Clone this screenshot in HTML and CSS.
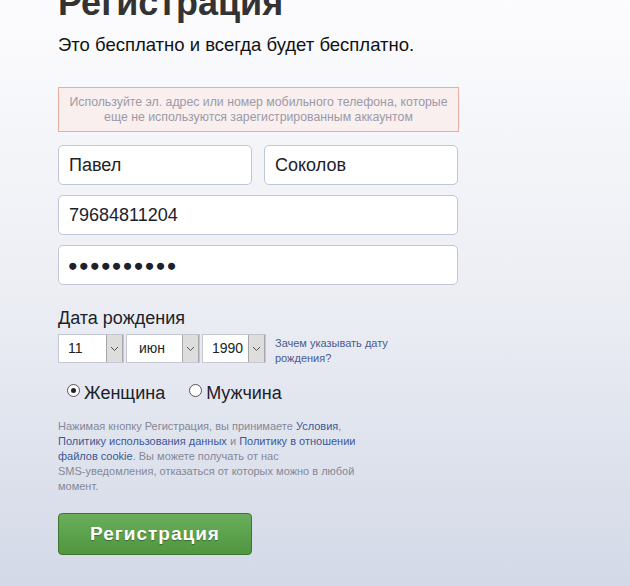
FILE: index.html
```html
<!DOCTYPE html>
<html lang="ru">
<head>
    <meta charset="UTF-8">
    <title>Регистрация</title>
    <link rel="stylesheet" href="styles.css">
</head>
<body>
    <div class="signup">
        <h1 class="title">Регистрация</h1>
        <div class="subtitle">Это бесплатно и всегда будет бесплатно.</div>

        <!-- Подсказка об ошибке -->
        <div class="notice">Используйте эл. адрес или номер мобильного телефона, которые<br>еще не используются зарегистрированным аккаунтом</div>

        <div class="row">
            <div class="field half">Павел</div>
            <div class="field half">Соколов</div>
        </div>
        <div class="field">79684811204</div>
        <div class="field dots">●●●●●●●●●●</div>

        <div class="label">Дата рождения</div>
        <div class="birthday">
            <div class="select day"><span class="val">11</span><span class="arrow"><svg width="9" height="6" viewBox="0 0 9 6"><path d="M1 1l3.5 3.5L8 1" fill="none" stroke="#555" stroke-width="1"/></svg></span></div>
            <div class="select month"><span class="val">июн</span><span class="arrow"><svg width="9" height="6" viewBox="0 0 9 6"><path d="M1 1l3.5 3.5L8 1" fill="none" stroke="#555" stroke-width="1"/></svg></span></div>
            <div class="select year"><span class="val">1990</span><span class="arrow"><svg width="9" height="6" viewBox="0 0 9 6"><path d="M1 1l3.5 3.5L8 1" fill="none" stroke="#555" stroke-width="1"/></svg></span></div>
            <a class="why" href="#">Зачем указывать дату<br>рождения?</a>
        </div>

        <div class="gender">
            <label class="radio"><span class="circle checked"></span>Женщина</label>
            <label class="radio"><span class="circle"></span>Мужчина</label>
        </div>

        <p class="terms">Нажимая кнопку Регистрация, вы принимаете <a href="#">Условия</a>,<br><a href="#">Политику использования данных</a> и <a href="#">Политику в отношении<br>файлов cookie</a>. Вы можете получать от нас<br>SMS-уведомления, отказаться от которых можно в любой<br>момент.</p>

        <button class="submit">Регистрация</button>
    </div>
</body>
</html>
```

FILE: styles.css
```css
html {
    height: 100%;
}

body {
    margin: 0;
    min-height: 100%;
    overflow: hidden;
    font-family: 'Liberation Sans', Arial, sans-serif;
    background: linear-gradient(to bottom, #fcfcfe 0%, #eceef4 50%, #d3d9e7 100%);
    color: #1d2129;
}

.signup {
    display: flex;
    flex-direction: column;
    align-items: flex-start;
    padding-left: 58px;
    width: 400px;
}

.title {
    margin: -15px 0 0 0;
    font-size: 36px;
    line-height: 36px;
    font-weight: bold;
    color: #333;
}

.subtitle {
    margin-top: 14px;
    font-size: 18.5px;
    line-height: 20px;
    color: #111;
}

/* Подсказка */
.notice {
    box-sizing: border-box;
    width: 401px;
    margin-top: 32px;
    padding: 7px 2px 6px;
    border: 1px solid #efab9e;
    background: #f9efef;
    color: #9b9aa6;
    font-size: 12.3px;
    line-height: 15px;
    text-align: center;
}

.row {
    display: flex;
    gap: 12px;
    margin-top: 13px;
}

.field {
    box-sizing: border-box;
    width: 400px;
    height: 40px;
    margin-bottom: 10px;
    padding: 0 10px;
    border: 1px solid #bdc7d8;
    border-radius: 5px;
    background: #fff;
    font-size: 18px;
    line-height: 38px;
    color: #1d2129;
}

.row .field {
    margin-bottom: 0;
}

.row + .field {
    margin-top: 10px;
}

.field.half {
    width: 194px;
}

.field.dots {
    padding-left: 9px;
    font-size: 16.5px;
    letter-spacing: 1px;
}

.label {
    margin-top: 13px;
    font-size: 18px;
    line-height: 20px;
    color: #1d2129;
}

/* Дата рождения */
.birthday {
    display: flex;
    align-items: flex-start;
    gap: 2px;
    margin-top: 6px;
}

.select {
    box-sizing: border-box;
    display: flex;
    height: 29px;
    border: 1px solid #c3c7d1;
    background: #fff;
    font-size: 14px;
}

.select .val {
    flex: 1;
    padding-left: 9px;
    line-height: 27px;
    color: #222;
}

.select .arrow {
    width: 15px;
    display: flex;
    align-items: center;
    justify-content: center;
    background: #dddddd;
    border-left: 1px solid #a8a8a8;
    border-right: 1px solid #a8a8a8;
}

.day { width: 66px; }
.month { width: 74px; }
.month .val { padding-left: 12px; }
.year { width: 64px; }

.why {
    margin-left: 7px;
    margin-top: 2px;
    font-size: 11px;
    line-height: 15px;
    color: #4b5b8f;
    text-decoration: none;
}

.gender {
    display: flex;
    gap: 24px;
    margin-top: 17px;
    padding-left: 9px;
}

.radio {
    display: flex;
    align-items: center;
    font-size: 18px;
    line-height: 20px;
    color: #1d2129;
}

.circle {
    box-sizing: border-box;
    width: 13px;
    height: 13px;
    margin-right: 4px;
    margin-top: -6px;
    border: 1px solid #555;
    border-radius: 50%;
    background: #fff;
    display: flex;
    align-items: center;
    justify-content: center;
}

.circle.checked::after {
    content: "";
    width: 5px;
    height: 5px;
    border-radius: 50%;
    background: #222;
}

.terms {
    margin: 16px 0 0 0;
    font-size: 11px;
    line-height: 15px;
    color: #858896;
}

.terms a {
    color: #3b5998;
    text-decoration: none;
}

.submit {
    box-sizing: border-box;
    width: 194px;
    height: 42px;
    margin-top: 19px;
    border: 1px solid #3e7530;
    border-radius: 4px;
    background: linear-gradient(to bottom, #6aae5b 0%, #4f963f 100%);
    color: #fff;
    font-family: 'Liberation Sans', Arial, sans-serif;
    font-size: 19px;
    font-weight: bold;
    letter-spacing: 1px;
    text-shadow: 0 1px 1px rgba(0, 0, 0, 0.35);
    cursor: pointer;
}
```
